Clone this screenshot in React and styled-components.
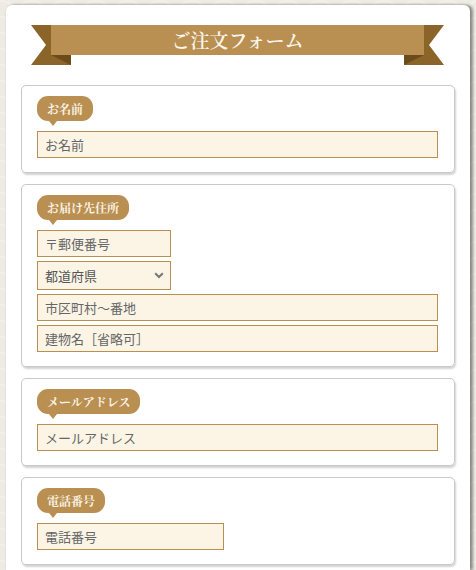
import React from "react";
import styled, { createGlobalStyle } from "styled-components";

const GlobalStyle = createGlobalStyle`
  html, body {
    margin: 0;
    padding: 0;
    overflow: hidden;
  }
  body {
    background-color: #eeebe4;
    background-image:
      radial-gradient(circle at 0 100%, transparent 14px, rgba(255,255,255,0.35) 15px, transparent 17px),
      radial-gradient(circle at 100% 100%, transparent 14px, rgba(255,255,255,0.35) 15px, transparent 17px);
    background-size: 32px 16px;
    font-family: "Noto Sans CJK JP", "Noto Sans", sans-serif;
  }
`;

const brown = "#b98f52";

const Panel = styled.div`
  margin: 5px 0 0 6px;
  width: 464px;
  height: 565px;
  box-sizing: border-box;
  background: #fff;
  border-radius: 6px 6px 0 0;
  box-shadow: 3px 0 3px rgba(0, 0, 0, 0.4), 0 0 2px rgba(0, 0, 0, 0.15);
  padding: 20px 15px 0 15px;
  display: flex;
  flex-direction: column;
  gap: 11px;
`;

const Ribbon = styled.div`
  position: relative;
  height: 40px;
  margin: 0 11px 9px 10px;
`;

const Tail = styled.span`
  position: absolute;
  top: 0;
  ${(p) => (p.side === "left" ? "left: 0;" : "right: 0;")}
  width: 40px;
  height: 40px;
  background: #8a6428;
  clip-path: ${(p) =>
    p.side === "left"
      ? "polygon(0 0, 100% 0, 100% 100%, 0 100%, 15px 50%)"
      : "polygon(0 0, 100% 0, 25px 50%, 100% 100%, 0 100%)"};
`;

const Fold = styled.span`
  position: absolute;
  top: 30px;
  ${(p) => (p.side === "left" ? "left: 20px;" : "right: 20px;")}
  width: 20px;
  height: 10px;
  background: #6b4a1c;
  clip-path: ${(p) =>
    p.side === "left"
      ? "polygon(0 0, 100% 0, 100% 100%)"
      : "polygon(0 0, 100% 0, 0 100%)"};
`;

const Band = styled.h1`
  position: relative;
  z-index: 1;
  margin: 0 20px;
  height: 30px;
  background: ${brown};
  color: #fbf6ec;
  font-family: "Noto Serif CJK JP", "Noto Sans CJK JP", serif;
  font-weight: 600;
  font-size: 19px;
  line-height: 30px;
  text-align: center;
`;

const Card = styled.section`
  border: 1px solid #c9c9c9;
  border-radius: 5px;
  box-shadow: 1px 2px 2px rgba(0, 0, 0, 0.18);
  padding: 10px 16px 14px 15px;
  display: flex;
  flex-direction: column;
  align-items: flex-start;
  gap: 4px;
`;

const Label = styled.div`
  position: relative;
  height: 25px;
  line-height: 25px;
  padding: 0 10px;
  margin-bottom: 6px;
  border-radius: 11px;
  background: ${brown};
  color: #fbf3e4;
  font-family: "Noto Serif CJK JP", "Noto Sans CJK JP", serif;
  font-size: 12px;
  font-weight: bold;
  &::after {
    content: "";
    position: absolute;
    left: 12px;
    bottom: -5px;
    border-left: 4px solid transparent;
    border-right: 4px solid transparent;
    border-top: 5px solid ${brown};
  }
`;

const Field = styled.input`
  box-sizing: border-box;
  width: ${(p) => p.w || "100%"};
  height: 27px;
  margin: 0;
  padding: 0 7px;
  border: 1px solid ${brown};
  border-radius: 0;
  background: #fcf5e6;
  font-family: "Noto Sans CJK JP", sans-serif;
  font-size: 13px;
  color: #555;
  outline: none;
  &::placeholder {
    color: #666;
  }
`;

const SelectWrap = styled.div`
  position: relative;
  width: 134px;
  height: 29px;
  svg {
    position: absolute;
    right: 7px;
    top: 11px;
    pointer-events: none;
  }
`;

const Select = styled.select`
  box-sizing: border-box;
  width: 100%;
  height: 100%;
  margin: 0;
  padding: 0 7px;
  appearance: none;
  border: 1px solid ${brown};
  border-radius: 0;
  background: #fcf5e6;
  font-family: "Noto Sans CJK JP", sans-serif;
  font-size: 13px;
  color: #555;
  outline: none;
`;

export default function App() {
  return (
    <>
      <GlobalStyle />
      <Panel>
        <Ribbon>
          <Tail side="left" />
          <Tail side="right" />
          <Fold side="left" />
          <Fold side="right" />
          <Band>ご注文フォーム</Band>
        </Ribbon>

        <Card>
          <Label>お名前</Label>
          <Field placeholder="お名前" />
        </Card>

        <Card>
          <Label>お届け先住所</Label>
          <Field w="134px" placeholder="〒郵便番号" />
          <SelectWrap>
            <Select defaultValue="">
              <option value="">都道府県</option>
            </Select>
            <svg width="10" height="7" viewBox="0 0 10 7">
              <path d="M1.2 1.2 L5 5 L8.8 1.2" fill="none" stroke="#777" strokeWidth="2" />
            </svg>
          </SelectWrap>
          <Field placeholder="市区町村〜番地" />
          <Field placeholder="建物名［省略可］" />
        </Card>

        <Card>
          <Label>メールアドレス</Label>
          <Field placeholder="メールアドレス" />
        </Card>

        <Card>
          <Label>電話番号</Label>
          <Field w="187px" placeholder="電話番号" />
        </Card>
      </Panel>
    </>
  );
}
